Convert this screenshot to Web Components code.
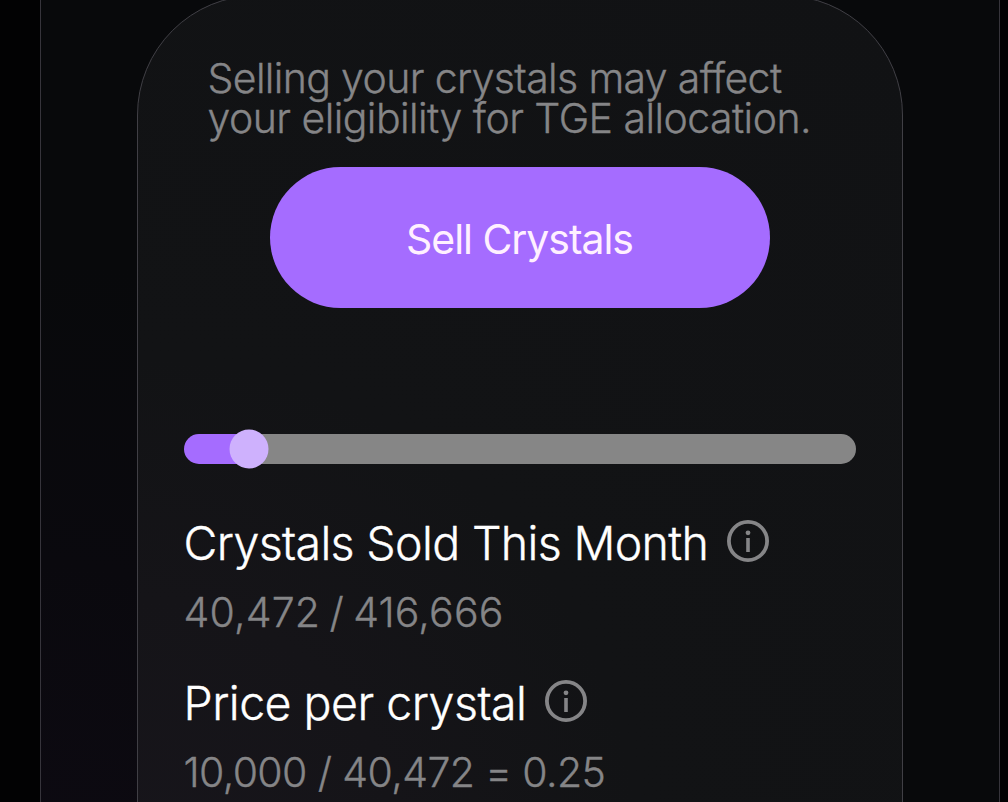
<!DOCTYPE html>
<html lang="en">
<head>
<meta charset="utf-8">
<title>Sell Crystals</title>
<style>
  html, body {
    margin: 0;
    height: 100%;
    overflow: hidden;
    background: #020203;
  }
  body {
    font-family: Inter, "Liberation Sans", sans-serif;
    font-weight: 300;
    -webkit-text-stroke: 0.35px;
    color: #fff;
    --muted: #858587;
    --accent: #a56cff;
    --thumb: #ceb1fd;
  }
</style>
</head>
<body>
<crystal-panel>
  <crystal-card>
    <crystal-note>
      <note-line style="letter-spacing: -0.64px">Selling your crystals may affect</note-line>
      <note-line style="letter-spacing: -0.55px">your eligibility for TGE allocation.</note-line>
    </crystal-note>
    <crystal-button>Sell Crystals</crystal-button>
    <crystal-progress value="65" max="672"></crystal-progress>
    <crystal-stat label="Crystals Sold This Month" value="40,472 / 416,666" style="--label-spacing: -0.66px; --value-spacing: 0.2px; --value-word-spacing: -2.5px"></crystal-stat>
    <crystal-stat label="Price per crystal" value="10,000 / 40,472 = 0.25" style="--label-spacing: -0.53px; --value-spacing: -0.6px"></crystal-stat>
  </crystal-card>
</crystal-panel>

<script>
class CrystalPanel extends HTMLElement {
  constructor() {
    super();

    this.attachShadow({ mode: 'open' }).innerHTML = `
      <style>
        :host {
          display: block;
          box-sizing: border-box;
          width: 960px;
          height: 802px;
          margin-left: 40px;
          padding: 0 96px;
          overflow: hidden;
          border: solid #36343b;
          border-width: 0 1px;
          background: radial-gradient(circle at 0 110%, #0d0a12 0, #0a090e 320px, #08090b 620px);
        }
      </style>
      <slot></slot>
    `;
  }
}

class CrystalCard extends HTMLElement {
  constructor() {
    super();

    this.attachShadow({ mode: 'open' }).innerHTML = `
      <style>
        :host {
          display: flex;
          flex-direction: column;
          box-sizing: border-box;
          height: 960px;
          margin-top: -5px;
          padding: 62px 46px 0;
          border: 1px solid #403f45;
          border-radius: 120px;
          background: radial-gradient(circle at 0 90%, #17151b 0, #151418 260px, #121315 500px, #111214 100%);
        }
      </style>
      <slot></slot>
    `;
  }
}

class CrystalNote extends HTMLElement {
  constructor() {
    super();

    this.attachShadow({ mode: 'open' }).innerHTML = `
      <style>
        :host {
          display: block;
          height: 109px;
          padding-left: 23.5px;
          font-size: 41px;
          line-height: 40px;
          color: var(--muted);
        }
      </style>
      <slot></slot>
    `;
  }
}

class NoteLine extends HTMLElement {
  constructor() {
    super();

    this.attachShadow({ mode: 'open' }).innerHTML = `
      <style>
        :host { display: block; white-space: nowrap; }
      </style>
      <slot></slot>
    `;
  }
}

class CrystalButton extends HTMLElement {
  constructor() {
    super();

    this.attachShadow({ mode: 'open' }).innerHTML = `
      <style>
        :host { display: flex; justify-content: center; }
        button {
          width: 500px;
          height: 141px;
          padding: 2px 1px 0 0;
          border: 0;
          border-radius: 71px;
          background: var(--accent);
          color: #fff0ff;
          font: 400 41px/48px Inter, "Liberation Sans", sans-serif;
          letter-spacing: -1.05px;
          -webkit-text-stroke: 0;
        }
      </style>
      <button type="button"><slot></slot></button>
    `;
  }
}

class CrystalProgress extends HTMLElement {
  constructor() {
    super();

    const percent = this.getAttribute('value') / this.getAttribute('max') * 100;

    this.attachShadow({ mode: 'open' }).innerHTML = `
      <style>
        :host {
          display: block;
          margin: 126px 0 49px;
        }
        .track {
          position: relative;
          height: 30px;
          border-radius: 15px;
          background: linear-gradient(to right, var(--accent) ${percent}%, #868686 0);
        }
        .thumb {
          position: absolute;
          top: 50%;
          left: ${percent}%;
          width: 39px;
          height: 39px;
          border-radius: 50%;
          background: var(--thumb);
          transform: translate(-50%, -50%);
        }
      </style>
      <div class="track"><div class="thumb"></div></div>
    `;
  }
}

class InfoIcon extends HTMLElement {
  constructor() {
    super();

    this.attachShadow({ mode: 'open' }).innerHTML = `
      <style>
        :host { display: block; width: 42px; height: 42px; color: #858587; }
        svg { display: block; }
      </style>
      <svg width="42" height="42" viewBox="0 0 42 42" fill="none">
        <circle cx="21" cy="21" r="19.1" stroke="currentColor" stroke-width="3.8"/>
        <circle cx="21" cy="12.8" r="2.4" fill="currentColor"/>
        <path d="M21 18v14" stroke="currentColor" stroke-width="3.6"/>
      </svg>
    `;
  }
}

class CrystalStat extends HTMLElement {
  constructor() {
    super();

    this.attachShadow({ mode: 'open' }).innerHTML = `
      <style>
        :host { display: block; height: 160px; white-space: nowrap; }
        .label {
          display: flex;
          gap: 19px;
          height: 60px;
          margin-left: -0.5px;
          font-size: 46.5px;
          line-height: 60px;
          letter-spacing: var(--label-spacing);
        }
        info-icon { margin-top: 7px; }
        .value {
          margin: 9px 0 0 -0.5px;
          font-size: 41px;
          line-height: 60px;
          letter-spacing: var(--value-spacing);
          word-spacing: var(--value-word-spacing, 0);
          color: var(--muted);
        }
      </style>
      <div class="label">
        <span>${this.getAttribute('label')}</span>
        <info-icon></info-icon>
      </div>
      <div class="value">${this.getAttribute('value')}</div>
    `;
  }
}

window.customElements.define('crystal-panel', CrystalPanel);
window.customElements.define('crystal-card', CrystalCard);
window.customElements.define('crystal-note', CrystalNote);
window.customElements.define('note-line', NoteLine);
window.customElements.define('crystal-button', CrystalButton);
window.customElements.define('crystal-progress', CrystalProgress);
window.customElements.define('info-icon', InfoIcon);
window.customElements.define('crystal-stat', CrystalStat);
</script>
</body>
</html>
